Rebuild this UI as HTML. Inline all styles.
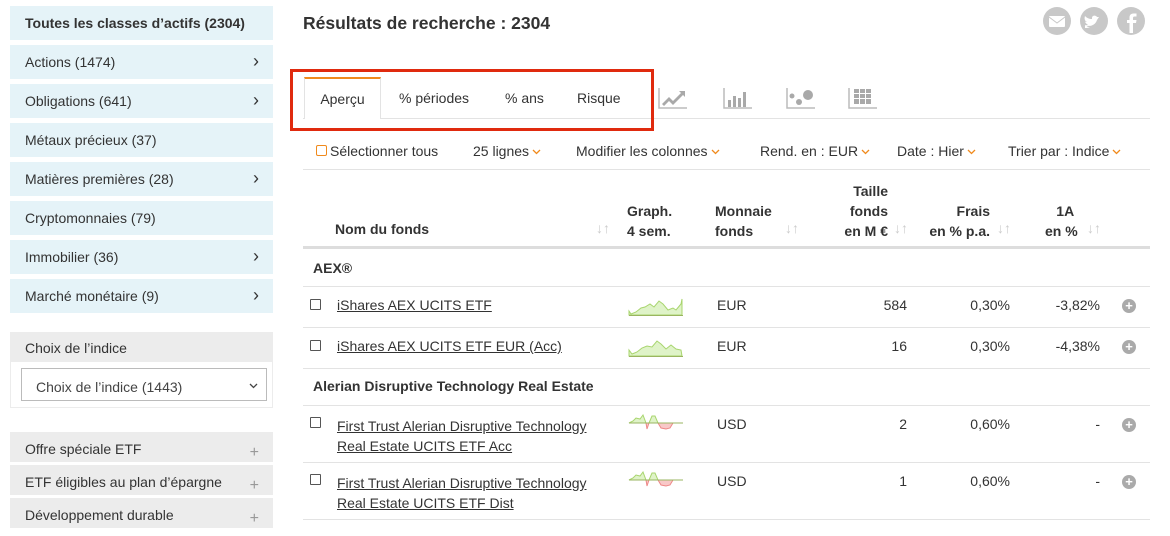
<!DOCTYPE html>
<html><head><meta charset="utf-8"><style>
*{margin:0;padding:0;box-sizing:border-box}
body{width:1170px;height:526px;overflow:hidden;background:#fff;font-family:"Liberation Sans",sans-serif;color:#333;font-size:14px;position:relative}
.a{position:absolute;white-space:nowrap}
.side{position:absolute;left:10px;width:263px;background:#e5f3f8;padding-left:15px;line-height:34px;height:34px;font-size:14px}
.side .ch{position:absolute;right:14px;top:-1px;font-size:18px}
.g{background:#ececec;height:30px;line-height:30px}
.g .pl{position:absolute;right:14px;top:4px;color:#999;font-size:16px}
.hl{position:absolute;left:303px;width:847px;height:1px;background:#e3e3e3}
.b{font-weight:bold}
.r{text-align:right}
.ar{color:#ccc;font-size:14px}
.lk{text-decoration:underline}
.cb{position:absolute;width:11px;height:11px;border:1px solid #555;border-radius:1px}
.plus{position:absolute;left:1122px;width:14px;height:14px;border-radius:50%;background:#aaa;color:#fff;font-size:13px;line-height:14px;text-align:center;font-weight:bold}
.or{display:inline-block;width:9px;height:6px;margin-left:3px;vertical-align:middle}
</style></head><body>
<div class="side b" style="top:6px">Toutes les classes d’actifs (2304)</div>
<div class="side" style="top:45px">Actions (1474)<span class="ch">›</span></div>
<div class="side" style="top:84px">Obligations (641)<span class="ch">›</span></div>
<div class="side" style="top:123px">Métaux précieux (37)</div>
<div class="side" style="top:162px">Matières premières (28)<span class="ch">›</span></div>
<div class="side" style="top:201px">Cryptomonnaies (79)</div>
<div class="side" style="top:240px">Immobilier (36)<span class="ch">›</span></div>
<div class="side" style="top:279px">Marché monétaire (9)<span class="ch">›</span></div>
<div class="a" style="left:10px;top:332px;width:263px;height:76px;border:1px solid #ececec"></div>
<div class="side g" style="top:332px;line-height:32px">Choix de l’indice</div>
<div class="a" style="left:21px;top:368px;width:246px;height:33px;border:1px solid #bbb;padding-left:14px;line-height:37px;color:#444">Choix de l’indice (1443)<svg style="position:absolute;right:8px;top:14px" width="9" height="6"><path d="M1 1l3.5 3.5L8 1" stroke="#444" fill="none" stroke-width="1.3"/></svg></div>
<div class="side g" style="top:432px;line-height:34px">Offre spéciale ETF<span class="pl">+</span></div>
<div class="side g" style="top:465px;line-height:34px">ETF éligibles au plan d’épargne<span class="pl">+</span></div>
<div class="side g" style="top:498px;line-height:34px">Développement durable<span class="pl">+</span></div>

<div class="a" style="left:303px;top:13px;font-size:17.5px;font-weight:600;color:#333">Résultats de recherche : 2304</div>
<svg class="a" style="left:1043px;top:6px" width="104" height="30">
<circle cx="14" cy="15" r="14" fill="#c8c8c8"/><rect x="6" y="10" width="16" height="11" rx="1" fill="#fff"/><path d="M6 11 L14 17 L22 11" stroke="#c8c8c8" fill="none"/>
<circle cx="51" cy="15" r="14" fill="#c8c8c8"/><path d="M42 19c4 2 10 1 12-5l2-3-2 0c-1-2-5-2-5 1v1c-3 0-5-1-7-3-1 3 0 5 2 6-1 0-2 0-2-1 0 2 2 3 3 4-1 0-2 0-2 0 1 2 2 2 4 2-2 1-3 1-5 1z" fill="#fff"/>
<circle cx="88" cy="15" r="14" fill="#c8c8c8"/><path d="M90 27v-10h3l0.5-3h-3.5v-2c0-1 0.5-1.5 1.5-1.5h2v-3h-3c-3 0-4 2-4 4v2.5h-2.5v3h2.5v10z" fill="#fff"/>
</svg>

<div class="hl" style="top:118px"></div>
<div class="a" style="left:304px;top:77px;width:77px;height:42px;border:1px solid #e3e3e3;border-top:2px solid #f08a1c;border-bottom:none;background:#fff;text-align:center;line-height:40px">Aperçu</div>
<div class="a" style="left:399px;top:90px">% périodes</div>
<div class="a" style="left:505px;top:90px">% ans</div>
<div class="a" style="left:577px;top:90px">Risque</div>
<div class="a" style="left:290px;top:69px;width:364px;height:62px;border:3px solid #e02a0e"></div>
<svg class="a" style="left:656px;top:86px" width="230" height="24" fill="#a9a9a9">
<path d="M3 2v20h28" stroke="#bbb" fill="none" stroke-width="1.5"/><path d="M6 18l7-7 4 4 8-8-2-2h6v6l-2-2-10 10-4-4-5 5z"/>
<path d="M68 2v20h28" stroke="#bbb" fill="none" stroke-width="1.5"/><rect x="72" y="14" width="3" height="7"/><rect x="77" y="10" width="3" height="11"/><rect x="82" y="12" width="3" height="9"/><rect x="87" y="6" width="3" height="15"/>
<path d="M131 2v20h28" stroke="#bbb" fill="none" stroke-width="1.5"/><circle cx="136" cy="10" r="2.5"/><circle cx="143" cy="16" r="3"/><circle cx="152" cy="9" r="5"/>
<path d="M193 2v20h28" stroke="#bbb" fill="none" stroke-width="1.5"/><g><rect x="198" y="3" width="5" height="4"/><rect x="204" y="3" width="5" height="4"/><rect x="210" y="3" width="5" height="4"/><rect x="198" y="8" width="5" height="4"/><rect x="204" y="8" width="5" height="4"/><rect x="210" y="8" width="5" height="4"/><rect x="198" y="13" width="5" height="5"/><rect x="204" y="13" width="5" height="5"/><rect x="210" y="13" width="5" height="5"/></g>
</svg>

<div class="a" style="left:316px;top:145px;width:11px;height:11px;border:1px solid #f08a1c;border-radius:2px"></div>
<div class="a" style="left:330px;top:143px">Sélectionner tous</div>
<div class="a" style="left:473px;top:143px">25 lignes<svg class="or"><path d="M1 1l3.5 3.5L8 1" stroke="#f08a1c" fill="none" stroke-width="1.3"/></svg></div>
<div class="a" style="left:576px;top:143px">Modifier les colonnes<svg class="or"><path d="M1 1l3.5 3.5L8 1" stroke="#f08a1c" fill="none" stroke-width="1.3"/></svg></div>
<div class="a" style="left:760px;top:143px">Rend. en : EUR<svg class="or"><path d="M1 1l3.5 3.5L8 1" stroke="#f08a1c" fill="none" stroke-width="1.3"/></svg></div>
<div class="a" style="left:897px;top:143px">Date : Hier<svg class="or"><path d="M1 1l3.5 3.5L8 1" stroke="#f08a1c" fill="none" stroke-width="1.3"/></svg></div>
<div class="a" style="left:1008px;top:143px">Trier par : Indice<svg class="or"><path d="M1 1l3.5 3.5L8 1" stroke="#f08a1c" fill="none" stroke-width="1.3"/></svg></div>
<div class="hl" style="top:169px"></div>

<div class="a b" style="left:335px;top:221px">Nom du fonds</div><div class="a ar" style="left:596px;top:220px">↓↑</div>
<div class="a b" style="left:627px;top:201px;line-height:20px">Graph.<br>4 sem.</div>
<div class="a b" style="left:715px;top:201px;line-height:20px">Monnaie<br>fonds</div><div class="a ar" style="left:785px;top:220px">↓↑</div>
<div class="a b r" style="left:830px;width:58px;top:181px;line-height:20px">Taille<br>fonds<br>en M €</div><div class="a ar" style="left:894px;top:220px">↓↑</div>
<div class="a b r" style="left:920px;width:70px;top:201px;line-height:20px">Frais<br>en % p.a.</div><div class="a ar" style="left:997px;top:220px">↓↑</div>
<div class="a b" style="left:1045px;top:201px;line-height:20px;text-align:center">&nbsp;&nbsp;1A<br>en %</div><div class="a ar" style="left:1087px;top:220px">↓↑</div>
<div class="a" style="left:303px;top:246px;width:847px;height:3px;background:#ddd"></div>

<div class="a b" style="left:313px;top:260px">AEX®</div>
<div class="hl" style="top:286px"></div>
<div class="cb" style="left:310px;top:299px"></div><div class="a lk" style="left:337px;top:297px">iShares AEX UCITS ETF</div>
<svg class="a" style="left:628px;top:295px" width="56" height="22"><path d="M1 20L1 16 3 19 8 17 13 13 17 12 22 9 26 12 31 6 35 9 40 15 45 13 48 15 53 9 54 4 54 20Z" fill="#dff3c8" stroke="#a8d56e"/><path d="M1 20.5H55" stroke="#9ab560"/></svg>
<div class="a" style="left:717px;top:297px">EUR</div><div class="a r" style="left:850px;width:57px;top:297px">584</div><div class="a r" style="left:940px;width:70px;top:297px">0,30%</div><div class="a r" style="left:1030px;width:70px;top:297px">-3,82%</div><div class="plus" style="top:299px">+</div>
<div class="hl" style="top:327px"></div>
<div class="cb" style="left:310px;top:340px"></div><div class="a lk" style="left:337px;top:338px">iShares AEX UCITS ETF EUR (Acc)</div>
<svg class="a" style="left:628px;top:336px" width="56" height="22"><path d="M1 20L1 14 4 18 9 16 14 12 19 10 24 11 29 5 33 8 38 13 43 9 48 13 53 14 54 20Z" fill="#dff3c8" stroke="#a8d56e"/><path d="M1 20.5H55" stroke="#9ab560"/></svg>
<div class="a" style="left:717px;top:338px">EUR</div><div class="a r" style="left:850px;width:57px;top:338px">16</div><div class="a r" style="left:940px;width:70px;top:338px">0,30%</div><div class="a r" style="left:1030px;width:70px;top:338px">-4,38%</div><div class="plus" style="top:340px">+</div>
<div class="hl" style="top:368px"></div>
<div class="a b" style="left:313px;top:378px">Alerian Disruptive Technology Real Estate</div>
<div class="hl" style="top:405px"></div>
<svg class="a" style="left:628px;top:412px" width="56" height="24"><path d="M1 11L5 9 8 6 12 7 15 3 18 11 21 11 24 4 27 4 30 11Z" fill="#dff3c8" stroke="#a8d56e"/><path d="M18 11 19 17 21 11ZM30 11 33 16 38 17 42 16 45 11Z" fill="#f8c8c8" stroke="#e88"/><path d="M1 11H55" stroke="#9ab560"/></svg>
<div class="cb" style="left:310px;top:417px"></div><div class="a lk" style="left:337px;top:416px;line-height:20px">First Trust Alerian Disruptive Technology<br>Real Estate UCITS ETF Acc</div>
<div class="a" style="left:717px;top:416px">USD</div><div class="a r" style="left:850px;width:57px;top:416px">2</div><div class="a r" style="left:940px;width:70px;top:416px">0,60%</div><div class="a r" style="left:1030px;width:70px;top:416px">-</div><div class="plus" style="top:418px">+</div>
<div class="hl" style="top:462px"></div>
<svg class="a" style="left:628px;top:469px" width="56" height="24"><path d="M1 11L5 9 8 6 12 7 15 3 18 11 21 11 24 4 27 4 30 11Z" fill="#dff3c8" stroke="#a8d56e"/><path d="M18 11 19 17 21 11ZM30 11 33 16 38 17 42 16 45 11Z" fill="#f8c8c8" stroke="#e88"/><path d="M1 11H55" stroke="#9ab560"/></svg>
<div class="cb" style="left:310px;top:474px"></div><div class="a lk" style="left:337px;top:473px;line-height:20px">First Trust Alerian Disruptive Technology<br>Real Estate UCITS ETF Dist</div>
<div class="a" style="left:717px;top:473px">USD</div><div class="a r" style="left:850px;width:57px;top:473px">1</div><div class="a r" style="left:940px;width:70px;top:473px">0,60%</div><div class="a r" style="left:1030px;width:70px;top:473px">-</div><div class="plus" style="top:475px">+</div>
<div class="hl" style="top:519px"></div>
</body></html>
